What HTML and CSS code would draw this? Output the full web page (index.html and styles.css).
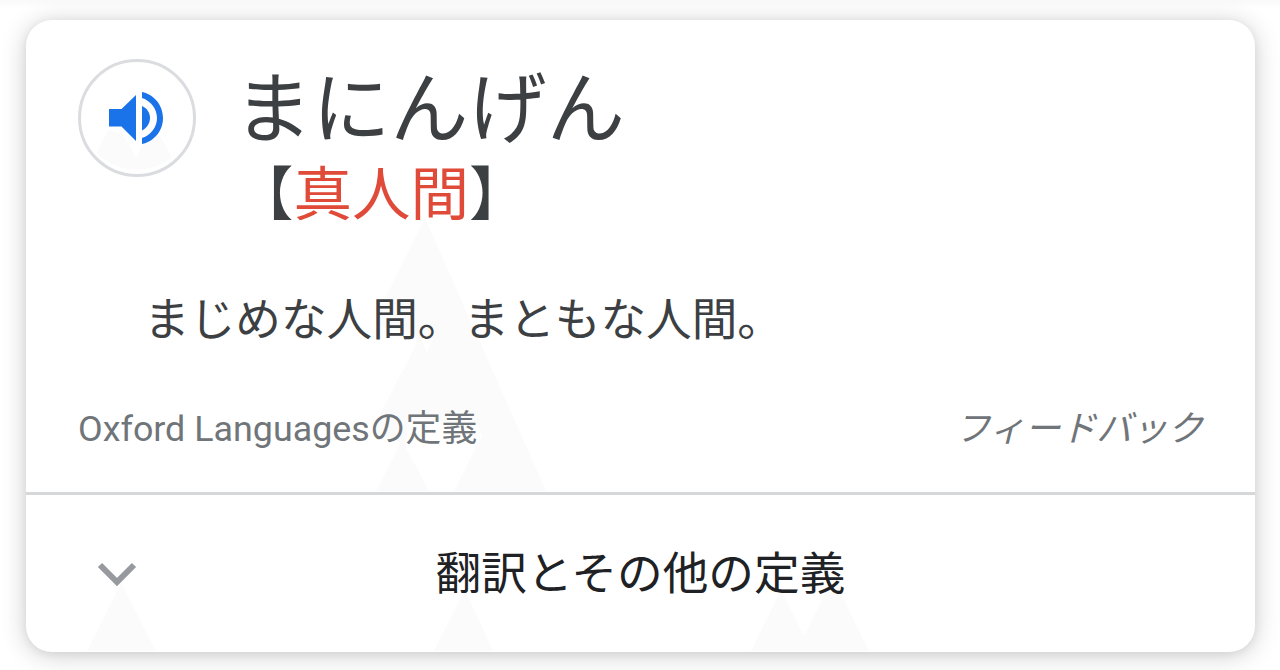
FILE: index.html
```html
<!DOCTYPE html>
<html lang="ja">
<head>
    <meta charset="UTF-8">
    <meta name="viewport" content="width=device-width, initial-scale=1.0">
    <title>まにんげん</title>
    <link rel="stylesheet" href="styles.css">
</head>
<body>

<div class="card">
    <!-- faint trees behind the text -->
    <svg class="trees" viewBox="0 0 1229 632" aria-hidden="true">
        <path d="M82 110L96 113L110 137L124 113L134 116L146 137A56 56 0 0 1 71 133Z"/>
        <path fill-rule="evenodd" d="M399 198L520 471H428L456 416L452 405L382 398L380 428L403 471H350L375 422L345 412L391 323L390 314L350 306L352 293ZM395 319L401 332L407 319Z"/>
        <path d="M95 563L130 631H61Z"/>
        <path d="M439 570L467 631H408Z"/>
        <path d="M755 570L778 616L800 572H814L843 631H725Z"/>
    </svg>

    <div class="definition">
        <div class="headword">
            <button class="audio" aria-label="発音を聞く">
                <svg viewBox="0 0 54 54">
                    <path d="M0 18H12.500L27 4V50L12.500 35.500H0Z"/>
                    <path d="M33 15C38 17 41 22 41 27S38 37 33 39.500Z"/>
                    <path d="M33 1C45 3.500 54 14 54 27S45 50.500 33 53V47C42 44 48 36 48 27S42 10 33 7Z"/>
                </svg>
            </button>
            <div>
                <h1>まにんげん</h1>
                <p class="kanji">【<span>真人間</span>】</p>
            </div>
        </div>
        <p class="meaning">まじめな人間。まともな人間。</p>
        <div class="source">
            <span>Oxford Languagesの定義</span>
            <em>フィードバック</em>
        </div>
    </div>

    <div class="more">
        <svg class="chevron" viewBox="0 0 40 26">
            <path d="M3 3L20 20L37 3"/>
        </svg>
        <span>翻訳とその他の定義</span>
    </div>
</div>

</body>
</html>
```
FILE: styles.css
```css
* {
    box-sizing: border-box;
}

body {
    margin: 0;
    padding: 20px 25px 18px 26px;
    height: 670px;
    overflow: hidden;
    background: linear-gradient(#f9f9f9, #fff 8px) no-repeat;
    font-family: Roboto, "Noto Sans CJK JP", sans-serif;
    color: #3c4043;
}

h1, p {
    margin: 0;
    font-weight: 400;
    white-space: nowrap;
}

.card {
    position: relative;
    height: 632px;
    border-radius: 26px;
    background: #fff;
    box-shadow: 0 3px 26px rgba(0, 0, 0, 0.2), 0 2px 10px rgba(0, 0, 0, 0.06);
    overflow: hidden;
}

.trees {
    position: absolute;
    left: 0;
    top: 0;
    width: 1229px;
    height: 632px;
    fill: #fbfbfb;
}

.definition {
    position: relative;
    height: 475px;
    border-bottom: 3px solid #d6d7d8;
    padding: 39px 52px 0 52px;
}

.headword {
    display: flex;
    gap: 38px;
    height: 218px;
}

.audio {
    display: flex;
    align-items: center;
    justify-content: center;
    width: 118px;
    height: 118px;
    padding: 0;
    border: 3px solid #dadce0;
    border-radius: 50%;
    background: none;
}

.audio svg {
    width: 54px;
    height: 54px;
    margin-right: 2px;
    fill: #1a73e8;
}

h1 {
    padding-top: 1px;
    font-size: 78.2px;
    line-height: 100px;
}

.kanji {
    padding-left: 1px;
    font-size: 58.5px;
    line-height: 70px;
}

.kanji span {
    color: #e04a39;
}

.meaning {
    padding-left: 66px;
    font-size: 45.65px;
    line-height: 88px;
}

.source {
    display: flex;
    justify-content: space-between;
    padding-top: 24px;
    font-size: 35.85px;
    line-height: 80px;
    color: #70757a;
}

.source em {
    font-size: 35.6px;
}

.more {
    position: relative;
    display: flex;
    align-items: center;
    justify-content: center;
    height: 157px;
    padding-bottom: 8px;
    font-size: 45.7px;
    color: #202124;
}

.chevron {
    position: absolute;
    left: 71px;
    top: 67px;
    width: 40px;
    height: 26px;
    fill: none;
    stroke: #96999e;
    stroke-width: 6;
}
```
